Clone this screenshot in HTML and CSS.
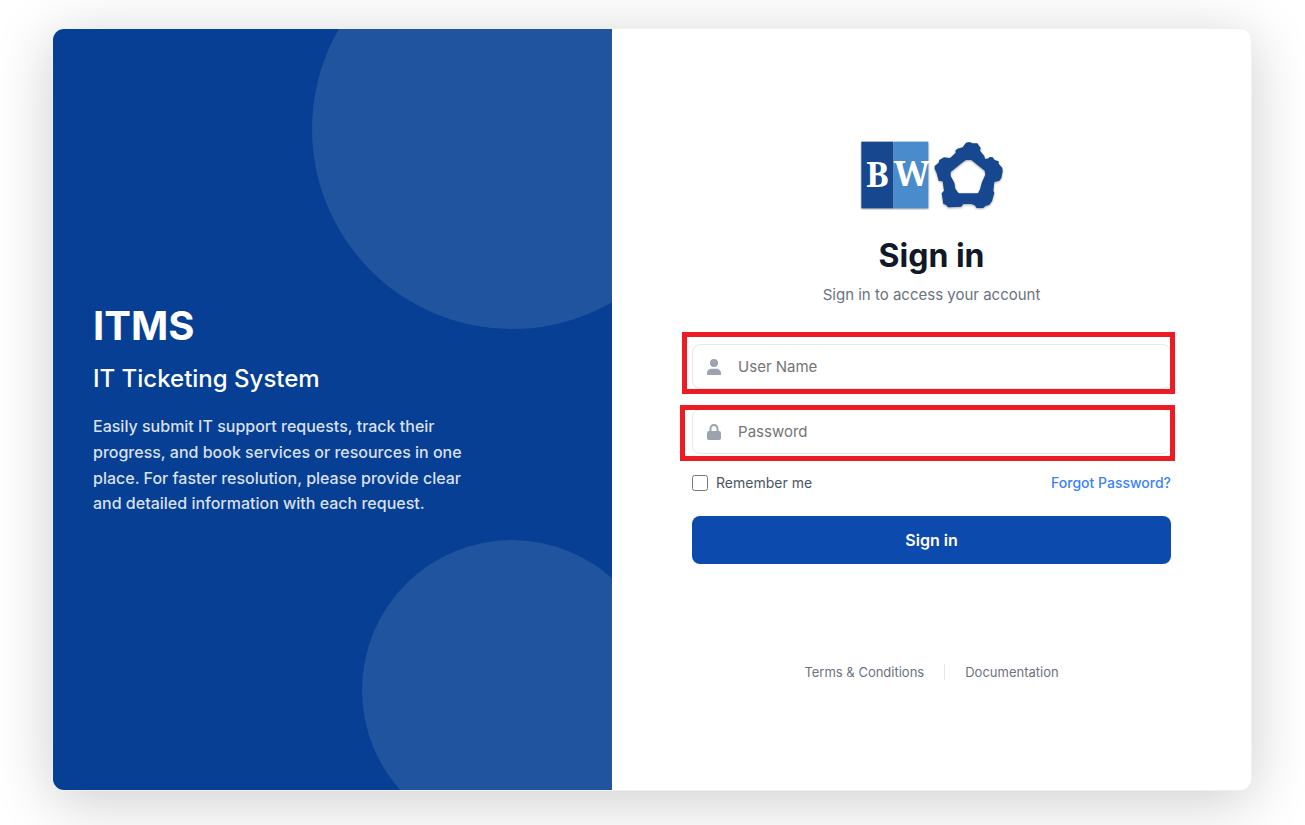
FILE: index.html
```html
<!DOCTYPE html>
<html lang="en">
<head>
  <meta charset="UTF-8" />
  <meta name="viewport" content="width=device-width, initial-scale=1.0"/>
  <title>ITMS - Sign in</title>
  <link rel="stylesheet" href="styles.css">
</head>
<body>
  <main class="card">
    <section class="intro">
      <h1 class="intro-title">ITMS</h1>
      <h2 class="intro-subtitle">IT Ticketing System</h2>
      <p class="intro-text">Easily submit IT support requests, track their progress, and book services or resources in one place. For faster resolution, please provide clear and detailed information with each request.</p>
    </section>

    <section class="login">
      <svg class="logo" viewBox="60 45 432 210" role="img" aria-label="BW logo">
        <g class="logo-shape">
          <rect x="64" y="50" width="96" height="200" fill="#17478f"/>
          <rect x="160" y="50" width="105" height="200" fill="#4a8ccb"/>
          <path transform="translate(270 33)" fill="#17478f" fill-rule="evenodd" d="M77 50L76 44L82 38L98 34L108 20L118 18L128 22L142 22L152 36L150 44L163 60L165 68L172 68L180 63L188 64L194 72L206 76L206 83L217 96L218 106L214 126L208 134L193 138L190 164L193 170L186 196L178 206L166 210L160 216L140 216L134 208L124 204L100 204L94 212L54 214L48 206L40 204L35 172L42 164L38 136L26 134L20 112L14 98L14 90L26 80L28 72L42 64L60 66L77 50Z
            M108 72L124 72L164 104L166 116L156 138L150 160L144 172L86 172L76 158L73 140L62 120L62 108L100 77Z"/>
        </g>
        <text class="logo-text" x="78" y="187">B</text>
        <text class="logo-text" x="161" y="184">W</text>
      </svg>
      <h2 class="login-title">Sign in</h2>
      <p class="login-subtitle">Sign in to access your account</p>

      <form>
        <div class="field field-user">
          <svg class="field-icon" viewBox="0 0 14 16" aria-hidden="true">
            <circle cx="7" cy="4" r="4"/>
            <path d="M0 14.2C0 11.6 2.2 9.8 4.8 9.8h4.4c2.6 0 4.8 1.8 4.8 4.4v.8c0 .6-.4 1-1 1H1c-.6 0-1-.4-1-1z"/>
          </svg>
          <input type="text" id="username" placeholder="User Name" aria-label="User Name">
        </div>
        <div class="field field-password">
          <svg class="field-icon" viewBox="0 0 14 16" aria-hidden="true">
            <path fill-rule="evenodd" d="M2.5 7V4.5a4.5 4.5 0 0 1 9 0V7h.5a2 2 0 0 1 2 2v5a2 2 0 0 1-2 2H2a2 2 0 0 1-2-2V9a2 2 0 0 1 2-2zM4.5 7h5V4.5a2.5 2.5 0 0 0-5 0z"/>
          </svg>
          <input type="password" id="password" placeholder="Password" aria-label="Password">
        </div>
        <div class="options">
          <label class="remember" for="remember"><input type="checkbox" id="remember">Remember me</label>
          <a class="forgot" href="#">Forgot Password?</a>
        </div>
        <button type="submit">Sign in</button>
      </form>

      <footer class="links">
        <a href="#">Terms &amp; Conditions</a>
        <a href="#">Documentation</a>
      </footer>
    </section>
  </main>
</body>
</html>
```

FILE: styles.css
```css
/* Base */
* { box-sizing: border-box; margin: 0; padding: 0; }
body { font-family: Inter, 'Liberation Sans', sans-serif; background: #fff; color: #111827; min-height: 100vh; display: flex; justify-content: center; padding: 28px 25px 34px 24px; }
a { text-decoration: none; }

.card { width: 100%; max-width: 1200px; display: grid; grid-template-columns: 7fr 8fr; background: #fff; border: 1px solid #f0f0f0; border-radius: 12px; box-shadow: 0 10px 60px rgba(0,0,0,0.2); overflow: hidden; }

/* Left panel */
.intro { position: relative; overflow: hidden; background: #063f93; color: #fff; padding: 40px; display: flex; flex-direction: column; justify-content: center; }
.intro::before, .intro::after { content: ''; position: absolute; border-radius: 50%; background: rgba(255,255,255,0.11); }
.intro::before { width: 400px; height: 400px; top: -100px; right: -100px; }
.intro::after { width: 300px; height: 300px; bottom: -50px; right: -50px; }
.intro-title { font-size: 40px; line-height: 48px; font-weight: 700; margin-bottom: 14px; }
.intro-subtitle { font-size: 24px; line-height: 30px; font-weight: 500; margin-bottom: 20px; }
.intro-text { max-width: 400px; font-size: 16px; line-height: 1.6; font-weight: 500; color: rgba(255,255,255,0.85); }

/* Sign in panel */
.login { padding: 40px 80px; display: flex; flex-direction: column; justify-content: center; text-align: center; }
.logo { width: 144px; height: 70px; margin: 0 auto 26px; }
.logo-shape { filter: drop-shadow(0 3px 3px rgba(0,0,0,0.35)); }
.logo-text { font-family: 'Noto Serif', 'DejaVu Serif', serif; font-size: 102px; font-weight: 700; fill: #fff; }
.login-title { font-size: 32px; line-height: 40px; font-weight: 700; margin-bottom: 8px; }
.login-subtitle { font-size: 15px; line-height: 22px; color: #6b7280; margin-bottom: 38px; }

.field { position: relative; margin-bottom: 20px; }
.field input { display: block; width: 100%; height: 45px; padding: 0 16px 0 45px; border: 1px solid #e5e7eb; border-radius: 8px; background: #fff; font: inherit; font-size: 15px; }
.field input::placeholder { color: #757575; }
.field-icon { position: absolute; left: 15px; top: 15px; width: 14px; height: 16px; fill: #9ca3af; }
.field::after { content: ''; position: absolute; border: 5px solid #ed1c24; pointer-events: none; }
.field-user::after { inset: -12px -4px -5px -10px; }
.field-password::after { inset: -4px -4px -7px -12px; }

.options { display: flex; justify-content: space-between; align-items: center; font-size: 14px; line-height: 20px; margin: -1px 0 23px; }
.remember { display: flex; align-items: center; gap: 8px; color: #4b5563; }
.remember input { width: 16px; height: 16px; }
.forgot { color: #3b82f6; font-weight: 500; }
button { width: 100%; height: 48px; background: #0c4aad; color: #fff; border: none; border-radius: 8px; font: inherit; font-size: 16px; font-weight: 600; cursor: pointer; }
button:hover { background: #063f93; }

.links { display: flex; justify-content: center; margin-top: 100px; font-size: 13px; line-height: 16px; }
.links a { color: #6b7280; padding: 0 20px; }
.links a + a { border-left: 1px solid #e5e7eb; }
```
